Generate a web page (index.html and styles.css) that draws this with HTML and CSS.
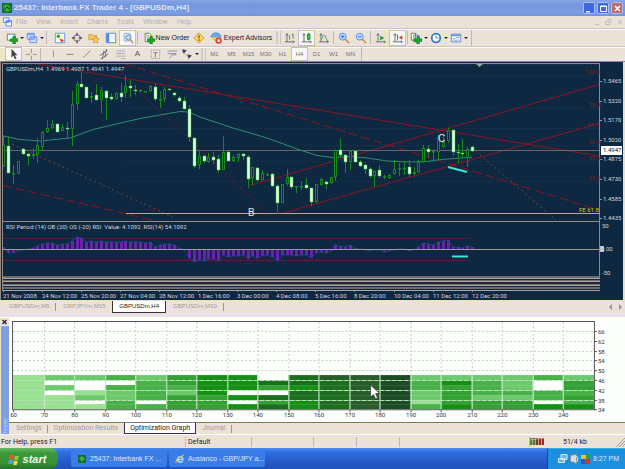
FILE: index.html
```html
<!DOCTYPE html>
<html lang="en">
<head>
<meta charset="utf-8">
<title>25437: Interbank FX Trader 4</title>
<link rel="stylesheet" href="styles.css">
</head>
<body>
<svg class="defs" aria-hidden="true">
  <symbol id="plus" viewBox="0 0 14 14"><path d="M8 5h3v3h3v3h-3v3H8v-3H5V8h3z" fill="#16a916" stroke="#0b720b" stroke-width=".6"/></symbol>
  <symbol id="axes" viewBox="0 0 14 14"><path d="M3.500 2v9.500M1 11.500h11M2 4l1.500-2L5 4M10.500 10l1.500 1.500-1.500 1.500" fill="none" stroke="#55605a"/></symbol>
</svg>

<header class="title">
  <svg class="app" viewBox="0 0 10 10"><path fill="#176b24" d="M0 0h10v10H0z"/><path d="M1 3l3-2 4 2 1 4-3 2-4-1z" fill="#2fa53c"/><path d="M2 7l3-3 3 2" stroke="#0a3f17" fill="none"/></svg>
  <h1>25437: Interbank FX Trader 4 - [GBPUSDm,H4]</h1>
  <button class="win" aria-label="Minimize"><svg viewBox="0 0 11 11"><path d="M2 8h4v1.500H2z" fill="#fff"/></svg></button>
  <button class="win" aria-label="Restore"><svg viewBox="0 0 11 11"><path d="M2.500 3h6v5.500h-6zM2.500 3.500h6" fill="none" stroke="#fff"/></svg></button>
  <button class="win close" aria-label="Close"><svg viewBox="0 0 11 11"><path d="M3 3l5 5M8 3L3 8" stroke="#fff" stroke-width="1.500"/></svg></button>
</header>

<nav class="menu">
  <svg class="doc" viewBox="0 0 10 10"><path d="M.5.500h6v5h-6zM3.500 3.500h6v6h-6z" fill="#fff" stroke="#4d86d4"/><path d="M3 4.500h7" stroke="#4d86d4"/></svg>
  <a href="#">File</a><a href="#">View</a><a href="#">Insert</a><a href="#">Charts</a><a href="#">Tools</a><a href="#">Window</a><a href="#">Help</a>
  <svg class="mdi" viewBox="0 0 32 10"><path d="M2 7.500h4M12.500 4.500h4v3h-4zM14 2.500h4v3M25 2.500l4 5M29 2.500l-4 5" fill="none" stroke="#c3c1b2"/></svg>
</nav>

<div class="bar">
  <button class="drop" aria-label="New chart"><svg viewBox="0 0 14 14"><path d="M1.500 2.500h9v7h-9z" fill="#fff" stroke="#3c8b4a"/><use href="#plus"/></svg></button>
  <button class="drop" aria-label="Profiles"><svg viewBox="0 0 14 14"><path d="M1.500 1.500h8v7h-8zM4.500 5.500h8v7h-8z" fill="#cfe2fb" stroke="#5f8fce"/><path d="M1.500 3h8M5 7h7" stroke="#5f8fce"/></svg></button>
  <i class="sep"></i>
  <button aria-label="Market watch"><svg viewBox="0 0 14 14"><path d="M1.500 1.500h11v11h-11z" fill="#fff" stroke="#5b90d6"/><path d="M5 3v4M3 5h4" stroke="#20a62d" stroke-width="2"/><path d="M7 8l4 2-2 2z" fill="#e33b2c" stroke="#e33b2c"/></svg></button>
  <button aria-label="Crosshair window"><svg viewBox="0 0 14 14"><circle cx="7" cy="7" r="4" fill="none" stroke="#666"/><path d="M7 1v4M7 9v4M1 7h4M9 7h4" stroke="#555" stroke-width="1.500"/></svg></button>
  <button aria-label="Navigator"><svg viewBox="0 0 14 14"><path d="M1 3h4l1 1h4v5H1z" fill="#f7d04e" stroke="#c68a1d" stroke-width=".7"/><path d="M9 5l1.300 2.500 2.700.4-2 2 .5 3-2.500-1.300L6.500 13 7 10 5 8l2.700-.4z" fill="#fbd445" stroke="#bf861e" stroke-width=".7"/></svg></button>
  <button aria-label="Terminal"><svg viewBox="0 0 14 14"><path d="M1.500 1.500h11v11h-11z" fill="#fff" stroke="#3e78c8"/><path d="M2 2h3v10H2z" fill="#4e8bdb"/><path d="M7 5h5M7 8h5" stroke="#c9d9ee"/></svg></button>
  <button class="on" aria-label="Strategy tester"><svg viewBox="0 0 14 14"><path d="M2.500 1.500h7v9h-7z" fill="#dce9f8" stroke="#8aa9cc"/><circle cx="7.500" cy="6.500" r="3" fill="#b9dcfa" stroke="#597fae"/><path d="M10 9l3 4" stroke="#c89b3c" stroke-width="2"/></svg></button>
  <i class="sep"></i>
  <button class="wide"><svg viewBox="0 0 14 14"><path d="M2.500 1.500h5l2 2v8h-7z" fill="#fff" stroke="#55775a"/><path d="M4 4h3M4 6h3" stroke="#888"/><use href="#plus"/></svg>New Order</button>
  <button aria-label="Editor"><svg viewBox="0 0 14 14"><path d="M7 1l6 6-6 6-6-6z" fill="#fbd64d" stroke="#c99a20"/><path d="M7 3.500v4M7 8.500v2" stroke="#8a6410" stroke-width="1.500"/></svg></button>
  <button class="wide ea"><svg viewBox="0 0 14 14"><path d="M1 6q1-5 6-5t6 5z" fill="#69aee8" stroke="#3c7cc2" stroke-width=".7"/><path d="M2 6h9v3q-4 3-8 0z" fill="#f2ca52"/><circle cx="10" cy="10" r="3.700" fill="#e33b25"/><path d="M8.500 8.500h3v3h-3z" fill="#fff"/></svg>Expert Advisors</button>
  <i class="sep grip"></i>
  <button aria-label="Bars"><svg viewBox="0 0 14 14"><use href="#axes"/><path d="M6.500 4v5M10.500 2v6M9 3h1.500" stroke="#2a8d3a"/></svg></button>
  <button class="on" aria-label="Candles"><svg viewBox="0 0 14 14"><use href="#axes"/><path d="M9 1v9" stroke="#157c25"/><path d="M7.500 2.500h3v6h-3z" fill="#2ad046" stroke="#157c25"/></svg></button>
  <button aria-label="Line"><svg viewBox="0 0 14 14"><use href="#axes"/><path d="M4 9q3-9 5-3t3 3" fill="none" stroke="#35a34a"/></svg></button>
  <i class="sep thin"></i>
  <button aria-label="Zoom in"><svg viewBox="0 0 14 14"><path d="M8 8l5 5" stroke="#cda23c" stroke-width="2.200"/><circle cx="5.500" cy="5.500" r="4" fill="#bfe1fb" stroke="#4386ca"/><path d="M5.500 3.500v4M3.500 5.500h4" stroke="#2060ad"/></svg></button>
  <button aria-label="Zoom out"><svg viewBox="0 0 14 14"><path d="M8 8l5 5" stroke="#cda23c" stroke-width="2.200"/><circle cx="5.500" cy="5.500" r="4" fill="#bfe1fb" stroke="#4386ca"/><path d="M3.500 5.500h4" stroke="#2060ad"/></svg></button>
  <i class="sep thin"></i>
  <button aria-label="Auto scroll"><svg viewBox="0 0 14 14"><use href="#axes"/><path d="M6 4l5 3-5 3z" fill="#24a83a"/></svg></button>
  <button class="on" aria-label="Chart shift"><svg viewBox="0 0 14 14"><use href="#axes"/><path d="M6.500 3v7" stroke="#555"/><path d="M12 4L8 6.500l4 2.500z" fill="#c23a24"/></svg></button>
  <i class="sep thin"></i>
  <button class="drop" aria-label="Indicators"><svg viewBox="0 0 14 14"><path d="M1.500 1.500h5v8h-5zM4.500 3.500h5v8h-5z" fill="#fff" stroke="#5b725d"/><use href="#plus"/></svg></button>
  <button class="drop" aria-label="Periods"><svg viewBox="0 0 14 14"><circle cx="7" cy="7" r="5" fill="#fff" stroke="#2c76cf" stroke-width="2"/><path d="M7 4v3h3" fill="none" stroke="#666"/></svg></button>
  <button class="drop" aria-label="Templates"><svg viewBox="0 0 14 14"><path d="M1.500 2.500h11v9h-11z" fill="#fff" stroke="#4a7fc6"/><path d="M2 3h10v2H2z" fill="#5d97df"/><path d="M3 7.500h3l1-1h4M3 9.500h8" fill="none" stroke="#839fbe"/></svg></button>
  <i class="sep end"></i>
</div>

<div class="bar low">
  <button class="on" aria-label="Cursor"><svg viewBox="0 0 14 14"><path d="M4 1v10l2.500-2L8 13l2-1-2-3.500h3z" fill="#444"/></svg></button>
  <button aria-label="Crosshair"><svg viewBox="0 0 14 14"><path d="M7.500 1v5M7.500 9v5M1 7.500h5M9 7.500h5" stroke="#8a8a80"/></svg></button>
  <i class="sep"></i>
  <button aria-label="Vertical line"><svg viewBox="0 0 14 14"><path d="M7.500 3v8" stroke="#8a8a80"/></svg></button>
  <button aria-label="Horizontal line"><svg viewBox="0 0 14 14"><path d="M3 7.500h8" stroke="#777"/></svg></button>
  <button aria-label="Trendline"><svg viewBox="0 0 14 14"><path d="M3 11l8-8" stroke="#777"/></svg></button>
  <button aria-label="Channel"><svg viewBox="0 0 14 14"><path d="M2 9l9-6M3 13l9-6M5 13l2-10M8 11l2-10" stroke="#666"/></svg></button>
  <button aria-label="Fibonacci"><svg viewBox="0 0 14 14"><path d="M2 3.500h10M2 6.500h10M2 9.500h10M7 12.500h5" stroke="#888" stroke-dasharray="2 1"/></svg></button>
  <button class="tf dark">A</button>
  <button aria-label="Text label"><svg viewBox="0 0 14 14"><path d="M2.500 2.500h10v10h-10z" fill="none" stroke="#888" stroke-dasharray="1 1"/><path d="M5 5.500h5M7.500 5v6" stroke="#777"/></svg></button>
  <button aria-label="Levels"><svg viewBox="0 0 14 14"><path d="M2 3.500h11M2 6.500h10M4 12l3-4h5" fill="none" stroke="#888"/></svg></button>
  <button class="drop" aria-label="Arrows"><svg viewBox="0 0 14 14"><path d="M2 2l4 1-3 3zM8 8l4 1-3 3z" fill="#444" stroke="#444"/><path d="M4 6l4 4" stroke="#666" stroke-dasharray="1 1"/></svg></button>
  <i class="sep grip"></i>
  <button class="tf">M1</button><button class="tf">M5</button><button class="tf">M15</button><button class="tf">M30</button><button class="tf">H1</button><button class="tf on">H4</button><button class="tf">D1</button><button class="tf">W1</button><button class="tf">MN</button>
  <i class="sep end"></i>
</div>

<main>
  <svg id="price" class="price" viewBox="0 61 625 240" role="img" aria-label="GBPUSDm,H4">
    <path fill="#0e2841" d="M0 61h625v240H0z"/>
    <path fill="#8f8780" d="M0 61h625v1H0zM0 61h1v240H0z"/>
    <path fill="#e5e1cc" d="M623 62h2v239h-2zM0 300h625v1H0z"/>
    <g fill="none" stroke="#8c1420">
      <path d="M37 64L599 156M250 185.500L599 84.500M280 214L599 123.500"/>
      <path stroke-dasharray="9 4" d="M125 64L599 210M3 185.500L127 214 151 220"/>
      <path stroke-dasharray="1 3" d="M125 75.500h474M125 108.500h474M125 128.500h474M125 145.500h474M125 161.500h474M125 181.500h474M3 64.500h596M3 219.500h596"/>
      <path stroke-dasharray="2 2" d="M127 80L267 213"/>
      <path stroke="#72472f" stroke-dasharray="2 3" d="M3 140L173 217M472 148L556 220"/>
    </g>
    <path stroke="#6c655f" d="M3 150.500h596"/>
    <path stroke="#c4b824" d="M126 213.500h473"/>
    <path fill="none" stroke="#2b8f70" d="M3 136L20 139.500 40 141 70 138 93 129.500 140 118.500 180 111.500 189 112 200 117 233 128 267 138 300 150 317 155.500 333 157.500 350 156.500 367 158 387 161 410 162 427 161.500 437 160 460 158 472 157.500"/>
    <g id="candles"></g>
    <path stroke="#3fe6d5" stroke-width="2" d="M448 167l19 5M452 256.500h16"/>
    <path fill="#a8a39d" d="M475 63h9l-4.500 4z"/>
    <g stroke="#8b0f22" fill="none" stroke-dasharray="3 1"><path d="M3 238.500h467M3 260.500h467"/></g>
    <g id="rsi"></g>
    <path stroke="#a09a90" d="M3 249.500h596"/>
    <path fill="#918a84" d="M2 63h598v1H2zM2 63h1v228H2zM599 63h1v158h-1zM2 221h598v1H2zM599 222h1v54h-1z"/>
    <path fill="#706d6b" d="M3 276h597v1H3zM3 277h597v2H3zM3 280h597v1H3zM3 284h597v2H3zM3 287h597v2H3z"/>
    <path fill="#aaa49a" d="M3 278h597v1H3zM3 281h597v1H3zM3 285h597v1H3zM3 290h597v1H3z"/>
    <path stroke="#8b1420" stroke-dasharray="1 2" d="M3 282.500h596"/>
    <path fill="#fff" d="M601 146h21v9h-21z"/>
    <path fill="#b9c3cc" d="M600 246h4v6h-4z"/>
    <g id="labels" class="axis">
      <text x="6" y="71">GBPUSDm,H4&#160; 1.4969 1.4987 1.4941 1.4947</text>
      <text x="6" y="229">RSI Period (14) OB (20) OS (-20) RSI&#160; Value: 4.1092&#160; RSI(14) 54.1092</text>
      <text x="602" y="228">50</text><text x="601" y="251">0.00</text><text x="602" y="275">-50</text>
      <text x="579" y="212" fill="#d2c90f">FE 61.8</text>
      <text x="603" y="152" fill="#111">1.4947</text>
    </g>
    <g class="mark"><text x="248" y="216">B</text><text x="438" y="142">C</text></g>
  </svg>
</main>

<nav class="tabs charts">
  <a href="#">GBPUSDm,M5</a><a href="#">GBPJPYm,M15</a><a href="#" class="cur">GBPUSDm,H4</a><a href="#">GBPUSDm,M30</a>
  <svg class="scroll" viewBox="0 0 18 8"><path d="M5 1v6L2 4zM12 1v6l3-3z" fill="#999689"/></svg>
</nav>

<section class="tester">
  <div class="side"><button aria-label="Close tester"><svg viewBox="0 0 7 7"><path d="M1.500 1.500l4 4M5.500 1.500l-4 4" stroke="#222" stroke-width="1.300"/></svg></button><span>Tester</span></div>
  <div class="pane">
    <svg id="heat" class="heat" viewBox="9 317 615 104" role="img" aria-label="Optimization Graph">
      <path fill="#fdfffd" d="M9 317h615v104H9z"/>
      <g id="cells"></g>
      <g id="grid" fill="none"></g>
      <path fill="none" stroke="#555" d="M12.500 408.500v-88h581v88z"/>
      <g id="ticks" class="axis"></g>
      <path d="M370 384v12l3-2.500 2 4.500 2-1-2-4.500h4z" fill="#fff" stroke="#222" stroke-width=".6"/>
    </svg>
    <nav class="tabs opts"><a href="#">Settings</a><a href="#">Optimization Results</a><a href="#" class="cur">Optimization Graph</a><a href="#">Journal</a></nav>
  </div>
</section>

<footer class="status">
  <span class="help">For Help, press F1</span><span class="def">Default</span><span class="s1"></span><span class="s2"></span><span class="s2"></span><span class="s3"></span>
  <span class="net"><svg viewBox="0 0 14 8"><path d="M0 1h14v7H0z" fill="#92312a"/><path d="M0 1h2v7H0zM3 2h2v6H3z" fill="#3d8a35"/><path d="M2.500 1v7M5.500 1v7M8.500 1v7M11.500 1v7M0 3l14-2" stroke="#e9dfbd" stroke-width=".6"/></svg>51/4 kb</span>
  <svg class="size" viewBox="0 0 10 10"><path d="M1 10l9-9M4 10l6-6M7 10l3-3" stroke="#a19e8f"/></svg>
</footer>

<div class="taskbar">
  <button class="start"><svg viewBox="0 0 12 12"><path d="M2 2q2-1 4 0L5 6Q3 5 1 6z" fill="#ee5a24"/><path d="M7 2.500q2 1 4 0L10 6.500q-2 1-4 0z" fill="#8fcc3a"/><path d="M1 7q2-1 4 0L4 11q-2-1-4 0z" fill="#5b9df5"/><path d="M6 7.500q2 1 4 0L9 11.500q-2 1-4 0z" fill="#fbd13c"/></svg>start</button>
  <button class="task"><svg viewBox="0 0 10 10"><path fill="#176b24" d="M1 1h8v8H1z"/><path d="M2 4l3-2 3 3-3 3z" fill="#39ad46"/></svg>25437: Interbank FX ...</button>
  <button class="task"><svg viewBox="0 0 10 10"><path d="M8 7Q6 9 3.500 7.500T4 3q4-1 4 2.500H3" fill="none" stroke="#a8dcff" stroke-width="1.500"/><path d="M1 9Q0 5 9 1" fill="none" stroke="#f0c649"/></svg>Auslanco - GBP/JPY a...</button>
  <div class="tray">
    <svg viewBox="0 0 34 12"><path d="M4 1.500h6v5H4zM1.500 5.500h6v4h-6z" fill="#68b5f5" stroke="#d7eafc"/><path d="M13.500 2h3l3-1v10l-3-2h-3z" fill="#d9dcdf" stroke="#76828e" stroke-width=".7"/><path d="M19.500 3q3 3 0 6" fill="none" stroke="#eee"/><path d="M24 2h5v4h-5z" fill="#e9c42c"/><path d="M29 1h4v5h-4z" fill="#329a3f"/><path d="M24 6h4v5h-4z" fill="#265bc0"/><path d="M28 6h5v5h-5z" fill="#d6352c"/></svg>
    <time>8:27 PM</time>
  </div>
</div>
<script src="charts.js"></script>
</body>
</html>
```
FILE: styles.css
```css
* { box-sizing: border-box; }
:root {
  --panel: repeating-conic-gradient(#f4eaae 0 25%, #e3e2dc 0 50%) 0 0 / 2px 2px;
  --muted: #a19e8e;
}
body {
  margin: 0;
  min-height: 100vh;
  display: flex;
  flex-direction: column;
  background: var(--panel);
  font: 7px/10px "Liberation Sans", Arial, sans-serif;
  color: #333;
}
button { font: inherit; color: inherit; border: 0; padding: 0; background: none; display: flex; align-items: center; justify-content: center; }
a { color: inherit; text-decoration: none; }
svg { display: block; flex: none; }
.defs { position: absolute; width: 0; height: 0; }

.title { display: flex; align-items: center; height: 16px; padding: 0 2px; gap: 2px; background: linear-gradient(#86a6e8, #7595de 30%, #7c9de4 80%, #7391d3); }
.app { width: 10px; height: 10px; }
.title h1 { flex: 1; margin: 0; font: bold 8px/14px "Liberation Sans", Arial, sans-serif; color: #dfe6f6; }
.win { width: 12px; height: 12px; border: 1px solid #a9c0f2; border-radius: 2px; background: #3c68dd; }
.win svg { width: 11px; height: 11px; }
.close { background: #bd6a70; }

.menu { display: flex; align-items: center; height: 12px; padding-left: 3px; color: #b5b29e; font-family: Roboto, sans-serif; }
.doc { width: 9px; height: 10px; margin-right: 4px; }
.menu a { margin-right: 9px; }
.mdi { width: 32px; height: 10px; margin-left: auto; }

.bar { display: flex; align-items: center; height: 18px; padding-left: 5px; border-top: 1px solid #c9c6b4; box-shadow: inset 0 1px #fffef0; }
.bar.low { height: 15px; }
.bar button { width: 17px; height: 16px; }
.bar.low button { height: 14px; }
.bar svg { width: 12px; height: 12px; }
.bar .on { background: #f8f7f1; border: 1px solid #c5c2b2; }
.bar .drop { width: 20px; gap: 2px; }
.bar .drop::after { content: ""; border: 2px solid transparent; border-top-color: #222; border-bottom: 0; }
.bar .wide { width: 48px; gap: 1px; white-space: nowrap; color: #222; }
.bar .ea { width: 68px; gap: 2px; }
.sep { width: 6px; height: 13px; border-left: 1px solid #bdbaa8; margin-left: 1px; margin-right: -1px; }
.sep.thin { width: 3px; }
.low .sep { width: 5px; }
.sep.grip { border-left: 2px solid #d1cebf; border-right: 1px solid #c9c6b6; width: 5px; margin-right: 0; }
.sep.end { width: 1px; margin: 0 0 0 2px; height: 16px; }
.tf { font-size: 6px; color: #75736a; }
.bar.low .dark { font-size: 8px; color: #555; }

.price, .heat { width: 100%; height: auto; }
.axis { font: 6px Roboto, sans-serif; fill: #d3d5d9; }
.heat .axis { fill: #333; }
.mark { font: 10px "Liberation Sans", Arial, sans-serif; fill: #f1ece4; }

.tabs { display: flex; color: var(--muted); height: 12px; line-height: 11px; }
.tabs a { padding: 0 7px; position: relative; }
.tabs a:not(.cur)::after { content: ""; position: absolute; right: 0; top: 2px; height: 8px; border-right: 1px solid #9b988a; }
.tabs .cur { background: #fff; color: #222; border: 1px solid #333; border-top: 0; }
.tabs a:has(+ .cur)::after { display: none; }
.charts { padding-left: 2px; margin-bottom: 4px; font-size: 6px; }
.charts .cur { padding: 0 6px; }
.scroll { width: 18px; height: 8px; margin: 2px 0 0 auto; }

.tester { display: flex; border-top: 1px solid #fff; }
.side { width: 9px; display: flex; flex-direction: column; align-items: center; }
.side button svg { width: 7px; height: 8px; }
.side span { flex: 1; width: 8px; writing-mode: vertical-rl; transform: rotate(180deg); background: #7f9fe3; color: #c2d3f5; line-height: 8px; font-size: 6px; }
.pane { flex: 1; min-width: 0; }
.opts { border-top: 1px solid #777; padding-left: 1px; font-family: Roboto, sans-serif; }
.opts a { padding: 0 6px; }
.opts .cur { padding: 0 5px; }

.status { display: flex; align-items: center; height: 14px; margin-top: auto; border-top: 1px solid #fff; color: #222; font-family: Roboto, sans-serif; }
.status span { height: 10px; border-right: 1px solid #bfbcab; }
.help { width: 186px; padding-left: 1px; }
.def { width: 66px; padding-left: 2px; }
.s1 { width: 62px; }
.s2 { width: 43px; }
.s3 { flex: 1; }
.status .net { display: flex; width: 84px; gap: 19px; border: 0; }
.net svg { width: 14px; height: 8px; }
.size { width: 10px; height: 10px; margin-left: 1px; }

.taskbar { display: flex; height: 21px; align-items: center; gap: 2px; color: #dfeaff; background: linear-gradient(#4a8af0, #2e6ee0 20%, #2458c6 70%, #2051bd); }
.start { width: 58px; height: 21px; margin-right: 11px; padding-right: 4px; gap: 3px; font: italic bold 11px "Liberation Sans", Arial, sans-serif; color: #f2fbe9; border-radius: 0 8px 8px 0; background: linear-gradient(#67b764, #3a9a3a 25%, #348f34 75%, #24722a); }
.start svg { width: 12px; height: 12px; }
.task { width: 96px; height: 17px; padding-left: 6px; gap: 3px; justify-content: flex-start; border-radius: 2px; background: #3a7ce8; white-space: nowrap; }
.task svg { width: 10px; height: 10px; }
.tray { display: flex; align-items: center; gap: 2px; margin-left: auto; width: 78px; height: 21px; padding-left: 9px; border-left: 1px solid #1747a8; border-top: 1px solid #2bb3e4; background: #1c90de; }
.tray svg { width: 34px; height: 12px; }
```
FILE: charts.js
```js
const NS = 'http://www.w3.org/2000/svg';
const add = (id, tag, attrs, text) => {
  const el = document.createElementNS(NS, tag);
  for (const k in attrs) el.setAttribute(k, attrs[k]);
  if (text) el.textContent = text;
  document.getElementById(id).append(el);
};
const barX = i => Math.round(3.3 + 4.884 * i);
const third = v => Math.round(v / 3);

// high, body top, body bottom, low, 1 = bearish (solid)
const bars = `225,256,318,322,0 228,257,338,338,1 315,338,340,372,0 304,304,341,341,0 265,268,281,284,1
279,281,287,315,1 264,281,288,296,0 235,256,284,308,0 212,217,260,272,0 180,205,217,220,0
180,192,205,208,0 190,191,215,215,1 191,202,214,214,0 185,204,208,238,1 93,132,208,258,0
63,72,132,150,0 35,72,80,82,1 80,82,113,114,1 95,108,113,130,0 72,106,119,120,1
80,90,119,158,0 90,92,113,180,1 100,111,118,122,1 95,100,118,120,0 70,98,111,125,1
45,78,98,115,0 60,78,84,110,1 75,89,93,104,1 88,91,93,95,0 92,93,95,97,0
75,79,94,97,0 72,80,116,124,1 93,116,118,145,0 80,86,116,125,0 85,86,89,90,1
95,98,106,110,1 108,114,122,126,1 110,122,146,147,1 136,146,232,245,1 232,233,317,325,1
270,289,316,328,0 284,288,304,308,1 278,290,306,308,0 277,292,299,312,1 285,298,330,340,1
228,277,330,330,0 272,277,304,304,1 285,291,303,306,0 280,283,293,306,0 278,283,289,300,1
285,290,356,385,1 320,322,354,374,0 322,323,361,364,1 331,339,360,362,0 338,342,344,348,0
340,341,377,382,1 372,378,428,463,1 372,373,428,430,0 327,351,373,378,0 350,352,381,388,1
378,379,381,399,0 362,377,379,390,0 355,375,383,384,1 384,385,426,438,1 371,372,426,430,0
354,356,374,376,0 364,367,371,386,1 350,352,370,372,0 266,270,352,364,0 234,270,285,290,1
282,286,305,338,1 270,272,305,330,0 270,273,305,305,1 300,306,317,322,1 312,316,326,341,1
321,327,349,353,1 330,332,349,380,0 316,331,349,354,1 345,348,350,358,0 342,344,354,357,0
300,326,342,344,0 310,324,326,348,0 303,323,326,345,0 300,321,342,350,1 320,335,342,344,0
300,306,335,338,0 256,265,306,308,0 254,266,276,290,1 268,274,277,306,0 224,232,276,300,0
225,245,262,264,0 204,211,243,248,0 210,211,276,287,1 253,276,280,310,1 238,279,283,294,1
262,266,293,322,0 257,261,272,275,1`.split(/\s+/).map(r => r.split(',').map(Number));
bars.forEach(([h, t, b, l, solid], i) => {
  const x = barX(i), top = 60 + third(t), height = Math.max(1, third(b) - third(t));
  add('candles', 'path', { d: `M${x + .5} ${60 + third(h)}V${60 + third(l)}`, stroke: '#178a1c' });
  add('candles', 'rect', solid
    ? { x: x - 1, y: top, width: 3, height, fill: '#e9ffe6', stroke: '#1cc22a', 'stroke-width': .5 }
    : { x: x - .5, y: top + .5, width: 2, height: Math.max(.5, height - 1), fill: '#0e2841', stroke: '#178a1c' });
});

const rsi = [110,130,128,122,119,118,115,108,103,100,98,104,103,102,92,82,84,95,92,96,93,97,97,97,97,92,96,96,97,98,97,110,106,103,102,104,113,120,145,156,150,152,148,147,153,136,140,138,138,134,146,138,144,138,135,140,152,136,134,136,138,136,136,144,130,127,130,124,106,107,112,106,115,118,120,123,121,121,126,122,119,118,118,123,121,110,98,102,104,97,93,90,111,112,115,108,112];
rsi.forEach((v, i) => {
  const y = 210 + third(v);
  add('rsi', 'rect', { x: barX(i) - 1, y: Math.min(y, 249), width: 3, height: Math.abs(y - 249), fill: '#6d22ad' });
});
add('rsi', 'polyline', { points: rsi.map((v, i) => `${barX(i)},${210 + third(v)}`).join(' '), fill: 'none', stroke: '#174f91', 'stroke-width': .7 });

['1.5465', '1.5320', '1.5170', '1.5020', '1.4875', '1.4730', '1.4585', '1.4435'].forEach((t, i) => {
  const y = Math.round(81 + 19.6 * i);
  add('labels', 'text', { x: 603, y: y + 2 }, t);
  add('labels', 'path', { d: `M600 ${y + .5}h2`, stroke: '#999' });
});
[['100.0', 585, 72], ['76.4', 589, 105], ['61.8', 588, 125], ['50.0', 589, 142], ['38.2', 589, 158], ['23.6', 589, 178]]
  .forEach(([t, x, y]) => add('labels', 'text', { x, y: y + 2, fill: '#7d2426' }, t));
['21 Nov 2008', '24 Nov 12:00', '25 Nov 20:00', '27 Nov 04:00', '28 Nov 12:00', '1 Dec 16:00', '3 Dec 00:00', '4 Dec 08:00', '5 Dec 16:00', '8 Dec 20:00', '10 Dec 04:00', '11 Dec 12:00', '12 Dec 20:00']
  .forEach((t, i) => {
    const x = 3 + Math.round(39.05 * i);
    add('labels', 'text', { x, y: 298 }, t);
    add('labels', 'path', { d: `M${x + .5} 290v2`, stroke: '#999' });
  });

// one string per pass column, top row first
const shades = { w: '#fdfffd', a: '#97e191', b: '#6cc96c', c: '#48b148', d: '#34a134', e: '#159015', f: '#1b6f1f', g: '#285c29', h: '#1c4b26' };
const cols = 'aaaaaaa bwbwaaa bwwabwa cwcbbcc bccccwc ddcbddd eeeeddd eeewewe wfdwfdf ffeffee gffffff ggggggg hhhhhhh bccbbac bedddde bcccbdd bbbcbdd cwwccwe bddcdce'.split(' ');
const rowY = r => 374 + Math.round(4.9 * r);
const colX = c => 13 + Math.round(30.5 * c);
cols.forEach((col, c) => [...col].forEach((k, r) =>
  add('cells', 'rect', { x: colX(c), y: rowY(r), width: Math.min(colX(c + 1), 593) - colX(c), height: rowY(r + 1) - rowY(r), fill: shades[k] })));
for (let c = 0; c < 19; c++) {
  const x = colX(c) + .5;
  if (c) {
    add('grid', 'path', { d: `M${x} 321V374`, stroke: '#c3d2c3', 'stroke-dasharray': '2 2' });
    add('grid', 'path', { d: `M${x} 374V408`, stroke: '#c8e8c8' });
  }
  add('ticks', 'path', { d: `M${x} 409v2`, stroke: '#555' });
  add('ticks', 'text', { x, y: 416, 'text-anchor': 'middle' }, String(60 + 10 * c));
}
[66, 62, 58, 54, 50, 46, 42, 38, 34].forEach((n, i) => {
  const y = Math.round(330 + 9.8 * i) + .5;
  if (n > 34) add('grid', 'path', { d: `M13 ${y}H593`, stroke: n > 48 ? '#c3d2c3' : '#b5dfb5', 'stroke-dasharray': n > 48 ? '2 2' : '5 1' });
  add('ticks', 'path', { d: `M593 ${y}h3`, stroke: '#555' });
  add('ticks', 'text', { x: 597, y: y + 2 }, String(n));
});
```
